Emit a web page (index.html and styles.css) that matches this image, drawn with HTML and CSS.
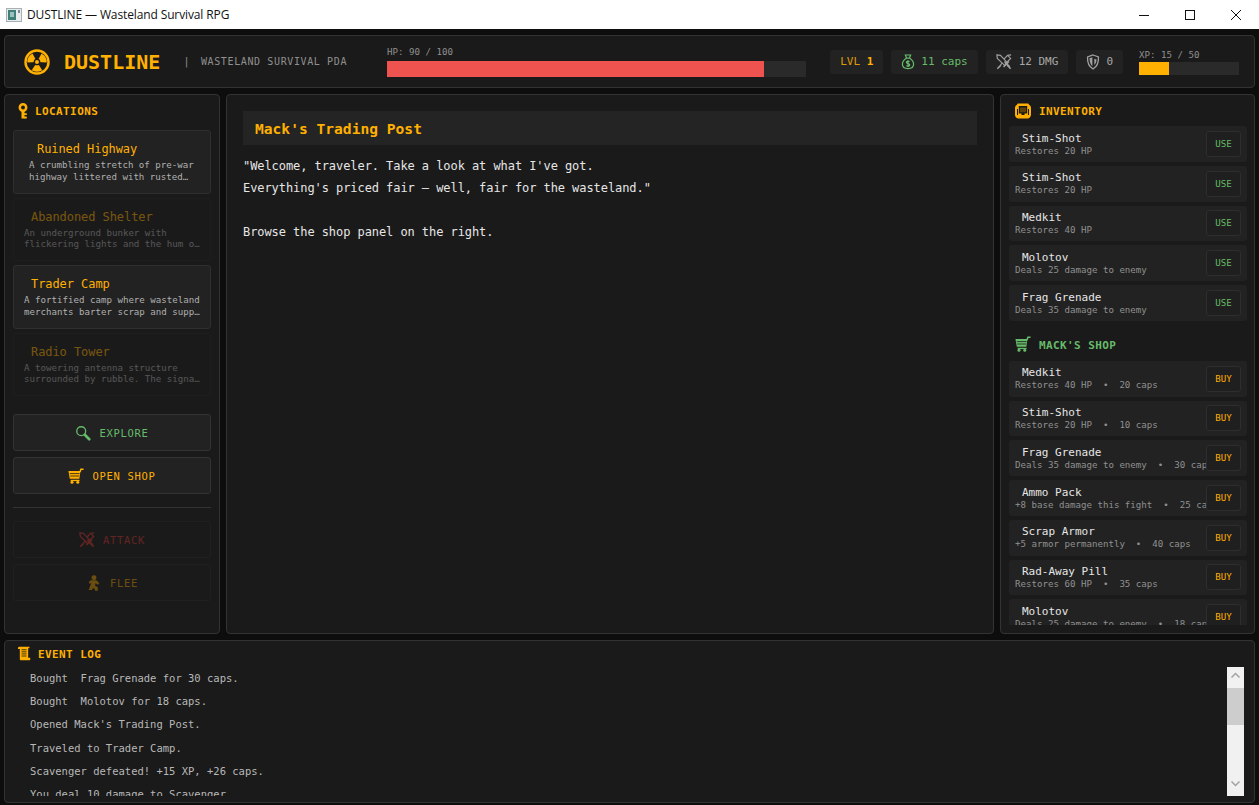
FILE: index.html
```html
<!DOCTYPE html>
<html lang="en">
<head>
<meta charset="utf-8">
<title>DUSTLINE — Wasteland Survival RPG</title>
<link rel="stylesheet" href="styles.css">
</head>
<body>
<div class="titlebar">
  <svg class="win-icon" viewBox="0 0 16 16"><rect x="0.5" y="1.500" width="15" height="13" fill="#e8ecec" stroke="#a8b0b4"/><rect x="2" y="3" width="8" height="10" fill="#3f7f7a"/><rect x="4" y="5" width="4" height="5" fill="#9cc0bc"/><rect x="12" y="3" width="2" height="3" fill="#7a8a90"/></svg>
  <span class="win-title">DUSTLINE — Wasteland Survival RPG</span>
  <div class="win-controls">
    <button class="win-btn"><svg viewBox="0 0 12 12" width="12" height="12"><path d="M1 6.500h10" stroke="#111" fill="none"/></svg></button>
    <button class="win-btn"><svg viewBox="0 0 12 12" width="12" height="12"><rect x="1.500" y="1.500" width="9" height="9" stroke="#111" fill="none"/></svg></button>
    <button class="win-btn"><svg viewBox="0 0 12 12" width="12" height="12"><path d="M1 1l10 10M11 1L1 11" stroke="#111" fill="none"/></svg></button>
  </div>
</div>

<div class="app">
  <header class="panel topbar">
    <svg class="logo-icon" viewBox="0 0 28 28">
      <circle cx="14" cy="14" r="12.400" fill="none" stroke="#ffb000" stroke-width="2.600"/>
      <path d="M14 14L8.400 5.200A10.400 10.400 0 0 1 19.600 5.200Z" fill="#ffb000" transform="rotate(60 14 14)"/>
      <path d="M14 14L8.400 5.200A10.400 10.400 0 0 1 19.600 5.200Z" fill="#ffb000" transform="rotate(180 14 14)"/>
      <path d="M14 14L8.400 5.200A10.400 10.400 0 0 1 19.600 5.200Z" fill="#ffb000" transform="rotate(300 14 14)"/>
      <circle cx="14" cy="14" r="3.600" fill="#1a1a1a"/>
      <circle cx="14" cy="14" r="2.200" fill="#ffb000"/>
    </svg>
    <h1 class="brand">DUSTLINE</h1>
    <span class="sep">|</span>
    <span class="tagline">WASTELAND SURVIVAL PDA</span>
    <div class="hp">
      <div class="meter-label">HP: 90 / 100</div>
      <div class="hp-track"><div class="hp-fill" style="width:90%"></div></div>
    </div>
    <div class="badges">
      <div class="badge badge-lvl"><span class="lvl-key">LVL</span><b>1</b></div>
      <div class="badge badge-caps">
        <svg class="badge-icon" viewBox="0 0 16 18" fill="none" stroke="#66bb6a" stroke-width="1.400"><path d="M5 1h6l-1.400 3.600H6.400zM6 4.600C3 6.600 1.600 9 1.600 11.600c0 3 2.400 4.900 6.400 4.900s6.400-1.900 6.400-4.900c0-2.600-1.400-5-4.400-7z"/><path d="M9.800 8.600C9.200 7.800 6.200 7.600 6.200 9.400c0 1.900 3.800 1.200 3.800 3.100 0 1.700-3.200 1.600-4 .7M8 7v7.800"/></svg>
        <span>11 caps</span>
      </div>
      <div class="badge badge-dim badge-sword">
        <svg class="badge-icon wide" viewBox="0 0 18 18" fill="none" stroke="#a0a0a0" stroke-width="1.300"><path d="M1 1l4 .5 8 8.500-3 3L1.500 5zM17 1l-4 .5-3.600 3.800M7 10.300L5 12.300"/><path d="M8.500 14.500l6-6M9.500 8.500l6 6M12.500 12.500l4 4M5.500 12.500l-4 4" stroke-width="1.700"/><path d="M13 1.500l3.500 3.500-6.400 6.300"/></svg>
        <span>12 DMG</span>
      </div>
      <div class="badge badge-dim">
        <svg class="badge-icon" viewBox="0 0 16 18"><path d="M8 1l6.200 2.200c.4 6.300-1.700 11-6.200 13.800C3.500 14.200 1.400 9.500 1.800 3.200z" fill="none" stroke="#a0a0a0" stroke-width="1.500"/><path d="M7.300 3.600l-3.300 1.200C4 9 5.200 12 7.300 13.800zM9.500 5.200l2.500.8c0 2.500-.7 4.500-2.500 6.400z" fill="#a0a0a0"/></svg>
        <span>0</span>
      </div>
    </div>
    <div class="xp">
      <div class="meter-label">XP: 15 / 50</div>
      <div class="xp-track"><div class="xp-fill" style="width:30%"></div></div>
    </div>
  </header>

  <main class="columns">
    <aside class="panel left">
      <h2 class="section-title title-left">
        <svg class="key-icon" viewBox="0 0 12 16" fill="none" stroke="#ffb000"><circle cx="6" cy="4.500" r="3.200" stroke-width="2.500"/><path d="M6 8V15.500" stroke-width="3"/><path d="M7 11.200h2.800M7 14.500h2.800" stroke-width="1.800"/></svg>
        <span>LOCATIONS</span>
      </h2>
      <div class="card-list">
        <div class="card card-hover"><div class="card-name">Ruined Highway</div><div class="card-desc">A crumbling stretch of pre-war highway littered with rusted…</div></div>
        <div class="card card-off"><div class="card-name">Abandoned Shelter</div><div class="card-desc">An underground bunker with flickering lights and the hum o…</div></div>
        <div class="card"><div class="card-name">Trader Camp</div><div class="card-desc">A fortified camp where wasteland merchants barter scrap and supp…</div></div>
        <div class="card card-off"><div class="card-name">Radio Tower</div><div class="card-desc">A towering antenna structure surrounded by rubble. The signa…</div></div>
      </div>
      <div class="actions">
        <button class="action action-green">
          <svg class="action-icon" viewBox="0 0 18 18" fill="none" stroke="#66bb6a"><circle cx="7" cy="7" r="5" stroke-width="1.500"/><path d="M11 11l5 5" stroke-width="3" stroke-linecap="round"/></svg>
          <span>EXPLORE</span>
        </button>
        <button class="action action-amber">
          <svg class="action-icon" viewBox="0 0 18 18"><path d="M.5 3.500h13.500l-1.200 8.500H2z" fill="#ffb000"/><path d="M2 6.300h11M2.500 9h10" stroke="#1a1a1a" stroke-width=".9"/><path d="M13.500 4.500l1-3h3" fill="none" stroke="#ffb000" stroke-width="1.700"/><path d="M3 14h10" stroke="#ffb000" stroke-width="1.500"/><circle cx="4.500" cy="16" r="1.700" fill="#ffb000"/><circle cx="11" cy="16" r="1.700" fill="#ffb000"/></svg>
          <span>OPEN SHOP</span>
        </button>
        <hr class="divider">
        <button class="action action-off action-red">
          <svg class="action-icon" viewBox="0 0 18 18" fill="none" stroke="#e53935" stroke-width="1.500"><path d="M1 1l4 .5 8 8.500-3 3L1.500 5zM17 1l-4 .5-3.600 3.800M7 10.300L5 12.300"/><path d="M13 1.500l3.500 3.500-6.400 6.300"/><path d="M8.500 14.500l6-6M9.500 8.500l6 6M12.500 12.500l4 4M5.500 12.500l-4 4" stroke-width="1.900"/></svg>
          <span>ATTACK</span>
        </button>
        <button class="action action-off action-amber">
          <svg class="action-icon" viewBox="0 0 18 18" fill="#ffb000"><circle cx="9" cy="3" r="2.800"/><path d="M5 6h6.500l3.500 3-1.400 2-3-1.600-.4 2.600 3 1.800v4h-3l-.4-2.200-2.300-1L7 17H3l2.500-6.500L6 8.500 4.500 10 3 8.500z"/></svg>
          <span>FLEE</span>
        </button>
      </div>
    </aside>

    <section class="panel center">
      <div class="scene-head">Mack's Trading Post</div>
      <p class="scene-text">"Welcome, traveler. Take a look at what I've got.</p>
      <p class="scene-text">Everything's priced fair — well, fair for the wasteland."</p>
      <p class="scene-text scene-gap">Browse the shop panel on the right.</p>
    </section>

    <aside class="panel right">
      <div class="right-scroll">
        <h2 class="section-title title-right">
          <svg class="title-icon" viewBox="0 0 16 16"><path d="M3.500.5h9c.8 0 1.300.5 1.500 1.300C15.200 2.400 16 3.500 16 5v6.500c0 2.300-1.400 4-3.600 4H3.600C1.400 15.500 0 13.800 0 11.500V5c0-1.500.8-2.600 2-3.200C2.200 1 2.700.5 3.500.5z" fill="#ffb000"/><path d="M3.800 3h8.400v7.500H9.500v1.500h-3v-1.500H3.800z" fill="#1a1a1a"/><path d="M5 4.500h6v4.800H5z" fill="#5a4208"/><path d="M2 6h1v6H2zM13 6h1v6h-1z" fill="#1a1a1a"/></svg>
          <span>INVENTORY</span>
        </h2>
        <div class="rows">
          <div class="row"><div class="row-text"><div class="row-name">Stim-Shot</div><div class="row-desc">Restores 20 HP</div></div><button class="row-btn row-use">USE</button></div>
          <div class="row"><div class="row-text"><div class="row-name">Stim-Shot</div><div class="row-desc">Restores 20 HP</div></div><button class="row-btn row-use">USE</button></div>
          <div class="row"><div class="row-text"><div class="row-name">Medkit</div><div class="row-desc">Restores 40 HP</div></div><button class="row-btn row-use">USE</button></div>
          <div class="row"><div class="row-text"><div class="row-name">Molotov</div><div class="row-desc">Deals 25 damage to enemy</div></div><button class="row-btn row-use">USE</button></div>
          <div class="row"><div class="row-text"><div class="row-name">Frag Grenade</div><div class="row-desc">Deals 35 damage to enemy</div></div><button class="row-btn row-use">USE</button></div>
        </div>
        <h2 class="section-title title-right title-shop">
          <svg class="title-icon" viewBox="0 0 18 18"><path d="M.5 3.500h13.500l-1.200 8.500H2z" fill="#66bb6a"/><path d="M2 6.300h11M2.500 9h10" stroke="#1a1a1a" stroke-width=".9"/><path d="M13.500 4.500l1-3h3" fill="none" stroke="#66bb6a" stroke-width="1.700"/><path d="M3 14h10" stroke="#66bb6a" stroke-width="1.500"/><circle cx="4.500" cy="16" r="1.700" fill="#66bb6a"/><circle cx="11" cy="16" r="1.700" fill="#66bb6a"/></svg>
          <span>MACK'S SHOP</span>
        </h2>
        <div class="rows">
          <div class="row"><div class="row-text"><div class="row-name">Medkit</div><div class="row-desc">Restores 40 HP  •  20 caps</div></div><button class="row-btn row-buy">BUY</button></div>
          <div class="row"><div class="row-text"><div class="row-name">Stim-Shot</div><div class="row-desc">Restores 20 HP  •  10 caps</div></div><button class="row-btn row-buy">BUY</button></div>
          <div class="row"><div class="row-text"><div class="row-name">Frag Grenade</div><div class="row-desc">Deals 35 damage to enemy  •  30 caps</div></div><button class="row-btn row-buy">BUY</button></div>
          <div class="row"><div class="row-text"><div class="row-name">Ammo Pack</div><div class="row-desc">+8 base damage this fight  •  25 caps</div></div><button class="row-btn row-buy">BUY</button></div>
          <div class="row"><div class="row-text"><div class="row-name">Scrap Armor</div><div class="row-desc">+5 armor permanently  •  40 caps</div></div><button class="row-btn row-buy">BUY</button></div>
          <div class="row"><div class="row-text"><div class="row-name">Rad-Away Pill</div><div class="row-desc">Restores 60 HP  •  35 caps</div></div><button class="row-btn row-buy">BUY</button></div>
          <div class="row"><div class="row-text"><div class="row-name">Molotov</div><div class="row-desc">Deals 25 damage to enemy  •  18 caps</div></div><button class="row-btn row-buy">BUY</button></div>
        </div>
      </div>
    </aside>
  </main>

  <footer class="panel log">
    <h2 class="section-title title-log">
      <svg class="log-icon" viewBox="0 0 16 18"><path d="M3 1h11.500v1.800H13v11.400h2.500V16c0 .8-.6 1.200-1.200 1.200H4.500c-.8 0-1.500-.6-1.500-1.400V3.500H.8V2.400C.8 1.500 1.800 1 3 1z" fill="#ffb000"/><path d="M5 4.500h6M5 7h6M5 9.500h6M5 12h6" stroke="#1a1a1a" stroke-width="1"/></svg>
      <span>EVENT LOG</span>
    </h2>
    <div class="log-body">
      <div class="log-lines">
        <div class="log-line">Bought  Frag Grenade for 30 caps.</div>
        <div class="log-line">Bought  Molotov for 18 caps.</div>
        <div class="log-line">Opened Mack's Trading Post.</div>
        <div class="log-line">Traveled to Trader Camp.</div>
        <div class="log-line">Scavenger defeated! +15 XP, +26 caps.</div>
        <div class="log-line">You deal 10 damage to Scavenger.</div>
      </div>
      <div class="scrollbar">
        <div class="sb-arrow"><svg viewBox="0 0 17 17" width="17" height="17"><path d="M4.500 10.500l4-4 4 4" fill="none" stroke="#a3a3a3" stroke-width="1.500"/></svg></div>
        <div class="sb-track"><div class="sb-thumb"></div></div>
        <div class="sb-arrow"><svg viewBox="0 0 17 17" width="17" height="17"><path d="M4.500 6.500l4 4 4-4" fill="none" stroke="#a3a3a3" stroke-width="1.500"/></svg></div>
      </div>
    </div>
  </footer>
</div>
</body>
</html>
```

FILE: styles.css
```css
* { box-sizing: border-box; }
html, body { margin: 0; padding: 0; height: 100%; }
body {
  display: flex;
  flex-direction: column;
  height: 805px;
  overflow: hidden;
  background: #0d0d0d;
  color: #e0e0e0;
  font-family: "DejaVu Sans Mono", "Liberation Mono", monospace;
}
h1, h2, p { margin: 0; }

.titlebar {
  display: flex;
  align-items: center;
  flex: 0 0 29px;
  background: #fff;
  padding-left: 6px;
}
.win-icon { width: 16px; height: 16px; }
.win-title {
  margin-left: 5px;
  font: 12px "Open Sans", "Noto Sans", sans-serif;
  color: #111;
  letter-spacing: -0.12px;
}
.win-controls { display: flex; margin-left: auto; }
.win-btn {
  width: 46px;
  height: 29px;
  padding: 0;
  border: 0;
  background: transparent;
  display: flex;
  align-items: center;
  justify-content: center;
}

.app {
  flex: 1;
  min-height: 0;
  display: flex;
  flex-direction: column;
  gap: 6px;
  padding: 6px 4px 2px;
}
.panel {
  background: #1a1a1a;
  border: 1px solid #333;
  border-radius: 4px;
  min-width: 0;
  min-height: 0;
}

/* top bar */
.topbar {
  flex: 0 0 53px;
  display: flex;
  align-items: center;
  padding: 0 15px 0 19px;
}
.logo-icon { width: 26px; height: 26px; flex: none; margin-top: 1px; }
.brand {
  margin-left: 14px;
  font-size: 20px;
  line-height: 24px;
  font-weight: 700;
  color: #ffb000;
}
.sep { margin-left: 23px; font-size: 11px; color: #888; }
.tagline {
  margin-left: 11px;
  font-size: 10px;
  letter-spacing: 0.62px;
  color: #909090;
}
.hp { flex: 1; margin: 0 24px 0 40px; }
.meter-label { font-size: 9.150px; line-height: 12px; color: #909090; }
.hp .meter-label { margin-bottom: 3px; }
.hp-track { height: 16px; background: #2a2a2a; }
.hp-fill { height: 100%; background: #ef5350; }
.badges { display: flex; gap: 8px; }
.badge {
  display: flex;
  align-items: center;
  gap: 6px;
  height: 24px;
  padding: 0 10px;
  border-radius: 3px;
  background: #222;
  font-size: 11px;
  white-space: pre;
}
.badge-lvl { gap: 0; color: #ffb000; }
.lvl-key { opacity: .85; margin-right: 6.600px; }
.badge-caps { color: #66bb6a; }
.badge-dim { color: #a8a8a8; }
.badge-sword { gap: 7px; }
.badge-icon { width: 14px; height: 16px; flex: none; }
.badge-icon.wide { width: 16px; height: 16px; }
.xp { flex: 0 0 100px; margin-left: 16px; }
.xp .meter-label { margin-bottom: 1px; }
.xp-track { height: 13px; background: #2a2a2a; }
.xp-fill { height: 100%; background: #ffb000; }

/* columns */
.columns { flex: 1; min-height: 0; display: flex; gap: 6px; }
.left { flex: 0 0 216px; padding: 8px; }
.center { flex: 1; padding: 16px; }
.right { flex: 0 0 255px; padding: 8px 7px 8px 8px; }

.section-title {
  display: flex;
  align-items: center;
  height: 15px;
  font-size: 11px;
  font-weight: 700;
  letter-spacing: 0.4px;
  color: #ffb000;
}
.section-title span { padding-top: 2px; }
.title-left { gap: 6px; padding-left: 4px; margin-bottom: 12px; }
.key-icon { width: 12px; height: 16px; }
.title-right { gap: 8px; padding-left: 6px; margin-bottom: 8px; }
.title-shop { margin: 16px 0 9px; color: #66bb6a; }
.title-icon { width: 16px; height: 16px; flex: none; }
.title-log { gap: 7px; padding-left: 4px; margin-bottom: 6px; }
.log-icon { width: 14px; height: 15px; flex: none; }

/* location cards */
.card-list { display: flex; flex-direction: column; gap: 4px; }
.card {
  height: 63.600px;
  padding: 11px 8px 0 10px;
  background: #222;
  border: 1px solid #2f2f2f;
  border-radius: 3px;
}
.card-hover { padding-left: 15px; }
.card-hover .card-name { padding-left: 8px; }
.card-off { opacity: .4; background: #1c1c1c; border-color: #262626; }
.card-name {
  padding-left: 7px;
  font-size: 12px;
  line-height: 15px;
  letter-spacing: -0.07px;
  color: #ffb000;
  margin-bottom: 3px;
}
.card-desc {
  font-size: 9.150px;
  line-height: 11.500px;
  color: #b0b0b0;
}

/* action buttons */
.actions { display: flex; flex-direction: column; gap: 6px; margin-top: 18px; }
.action {
  display: flex;
  align-items: center;
  justify-content: center;
  gap: 8px;
  height: 37px;
  padding: 1px 0 0;
  background: #222;
  border: 1px solid #333;
  border-radius: 3px;
  font-family: inherit;
  font-size: 10.500px;
  letter-spacing: 0.7px;
}
.action-icon { width: 16px; height: 16px; flex: none; }
.action-green { color: #66bb6a; }
.action-amber { color: #ffb000; }
.action-red { color: #e53935; }
.action-off { opacity: .35; background: #1c1c1c; border-color: #2c2c2c; }
.divider {
  width: 100%;
  height: 1px;
  margin: 7px 0;
  border: 0;
  background: #333;
}

/* centre */
.scene-head {
  height: 34px;
  padding: 1px 0 0 12px;
  margin-bottom: 10px;
  background: #242424;
  font-size: 14.600px;
  line-height: 34px;
  font-weight: 700;
  color: #ffb000;
}
.scene-text {
  font-size: 12px;
  line-height: 22px;
  letter-spacing: -0.07px;
  color: #e6e6e6;
  white-space: pre;
}
.scene-gap { margin-top: 22px; }

/* right */
.right-scroll { height: 522px; overflow: hidden; }
.rows { display: flex; flex-direction: column; gap: 4px; }
.row {
  display: flex;
  align-items: center;
  height: 35.750px;
  padding: 0 6px;
  background: #222;
  border-radius: 3px;
}
.row-text { flex: 1; min-width: 0; overflow: hidden; white-space: pre; padding-top: 1px; }
.row-name {
  padding-left: 7px;
  font-size: 11px;
  line-height: 14px;
  color: #e6e6e6;
}
.row-desc { font-size: 9.150px; line-height: 11.750px; color: #909090; }
.row-btn {
  flex: none;
  width: 35px;
  height: 26px;
  padding: 0;
  background: #1f1f1f;
  border: 1px solid #2e2e2e;
  border-radius: 3px;
  font-family: inherit;
  font-size: 9.150px;
}
.row-use { color: #66bb6a; }
.row-buy { color: #ffb000; }

/* log */
.log {
  flex: 0 0 163px;
  padding: 5px 10px 6px 8px;
  display: flex;
  flex-direction: column;
}
.log-body { flex: 1; min-height: 0; display: flex; }
.log-lines { flex: 1; min-width: 0; overflow: hidden; padding-left: 17px; }
.log-line {
  font-size: 10.500px;
  line-height: 23.200px;
  color: #b8b8b8;
  white-space: pre;
}
.scrollbar {
  flex: 0 0 17px;
  display: flex;
  flex-direction: column;
  background: #f1f1f1;
}
.sb-arrow { flex: 0 0 17px; }
.sb-track { flex: 1; }
.sb-thumb { height: 37px; background: #cdcdcd; }
```
